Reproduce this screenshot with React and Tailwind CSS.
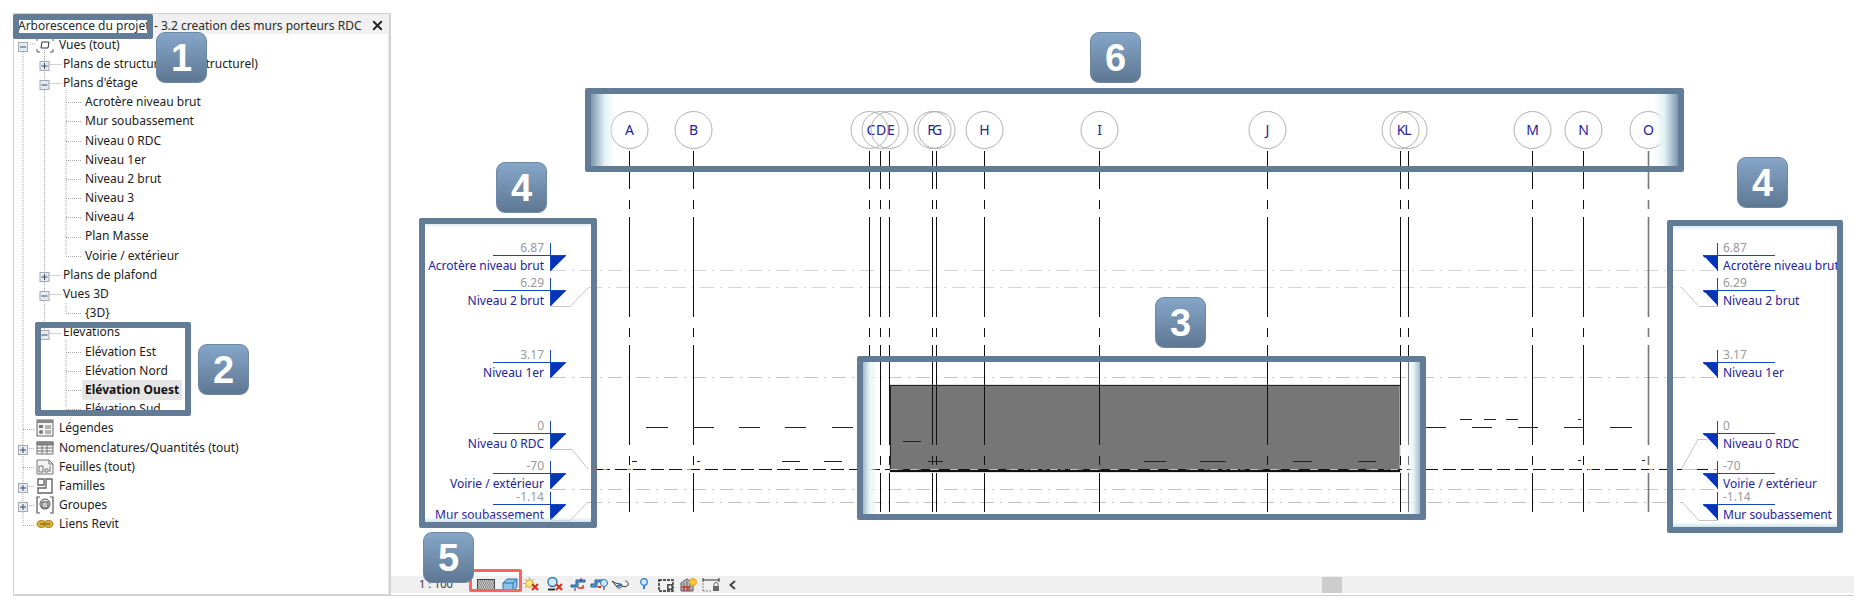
import React from 'react';
import { X } from 'lucide-react';

const treeRows = [
  { label: 'Vues (tout)', depth: 0, icon: 'views' },
  { label: 'Plans de structure (Tout structurel)', depth: 1 },
  { label: "Plans d'étage", depth: 1 },
  { label: 'Acrotère niveau brut', depth: 2 },
  { label: 'Mur soubassement', depth: 2 },
  { label: 'Niveau 0 RDC', depth: 2 },
  { label: 'Niveau 1er', depth: 2 },
  { label: 'Niveau 2 brut', depth: 2 },
  { label: 'Niveau 3', depth: 2 },
  { label: 'Niveau 4', depth: 2 },
  { label: 'Plan Masse', depth: 2 },
  { label: 'Voirie / extérieur', depth: 2 },
  { label: 'Plans de plafond', depth: 1 },
  { label: 'Vues 3D', depth: 1 },
  { label: '{3D}', depth: 2 },
  { label: 'Elévations', depth: 1 },
  { label: 'Elévation Est', depth: 2 },
  { label: 'Elévation Nord', depth: 2 },
  { label: 'Elévation Ouest', depth: 2, bold: true },
  { label: 'Elévation Sud', depth: 2 },
  { label: 'Légendes', depth: 0, icon: 'legend' },
  { label: 'Nomenclatures/Quantités (tout)', depth: 0, icon: 'table' },
  { label: 'Feuilles (tout)', depth: 0, icon: 'sheet' },
  { label: 'Familles', depth: 0, icon: 'family' },
  { label: 'Groupes', depth: 0, icon: 'group' },
  { label: 'Liens Revit', depth: 0, icon: 'link' },
];

const rowY = (i) => 44.5 + 19.2 * i;

const expanders = [
  [23, 0, false], [44.5, 1, true], [44.5, 2, false], [44.5, 12, true], [44.5, 13, false], [44.5, 15, false],
  [23, 21, true], [23, 23, true], [23, 24, true],
];

const TreeIcon = ({ name }) => {
  const cls = 'w-[18px] h-[18px] shrink-0';
  if (name === 'views') {
    return (
      <svg viewBox="0 0 18 18" className={cls} fill="none" stroke="#555" strokeWidth="1">
        <path d="M1 5V2h3M14 2h3v3M17 13v3h-3M4 16H1v-3" />
        <path d="M6 6h7l-1 6H5z" stroke="#333" />
      </svg>
    );
  }
  if (name === 'legend') {
    return (
      <svg viewBox="0 0 18 18" className={cls}>
        <rect x="1" y="1" width="16" height="16" fill="#f3f3f3" stroke="#666" />
        <rect x="1" y="1" width="16" height="3" fill="#8a8a8a" />
        <rect x="3" y="6" width="4" height="3" fill="#777" />
        <circle cx="5" cy="13" r="2" fill="#777" />
        <path d="M9 7h6M9 9h6M9 12h6M9 14h6" stroke="#777" />
      </svg>
    );
  }
  if (name === 'table') {
    return (
      <svg viewBox="0 0 18 18" className={cls} fill="#f5f5f5" stroke="#777">
        <rect x="1" y="3" width="16" height="12" />
        <path d="M1 3h16v3H1z" fill="#888" />
        <path d="M1 9h16M1 12h16M6 6v9M11 6v9" fill="none" />
      </svg>
    );
  }
  if (name === 'sheet') {
    return (
      <svg viewBox="0 0 18 18" className={cls} fill="none" stroke="#777">
        <path d="M1 2h12l4 4v10H1z" fill="#f3f3f3" />
        <path d="M13 2v4h4M3 8h4v6H3zM9 11h3v3H9zM14 8v6" />
      </svg>
    );
  }
  if (name === 'family') {
    return (
      <svg viewBox="0 0 18 18" className={cls} fill="none" stroke="#666" strokeWidth="1.4">
        <path d="M2 2h6v6H2zM10 2h6v14H2v-5h8z" />
      </svg>
    );
  }
  if (name === 'group') {
    return (
      <svg viewBox="0 0 18 18" className={cls} fill="none" stroke="#555">
        <path d="M4 1H1v16h3M14 1h3v16h-3" strokeWidth="1.2" />
        <circle cx="9" cy="8" r="5" fill="#e4e4e4" />
        <rect x="6" y="6" width="6" height="6" fill="#ccc" />
      </svg>
    );
  }
  return (
    <svg viewBox="0 0 18 18" className={cls} fill="#d8b036" stroke="#a8861f">
      <ellipse cx="5.5" cy="9" rx="4.5" ry="3.5" />
      <ellipse cx="12.5" cy="9" rx="4.5" ry="3.5" />
      <path d="M4 9h10" stroke="#6f5a14" />
    </svg>
  );
};

const TreeLines = () => (
  <svg viewBox="14 34 374 561" className="absolute inset-0 w-[374px] h-[561px]">
    <g stroke="#a8a8a8" strokeDasharray="1 1" fill="none">
      <path d="M23 50V524M44.5 50V332M66 90V255M66 303V312M66 340V408" />
      <path d="M30 44h6" />
      {treeRows.map((row, i) => {
        const y = Math.round(rowY(i)) + 0.5;
        if (row.depth === 2) return <path key={i} d={`M66 ${y}H82`} />;
        if (row.depth === 1) return <path key={i} d={`M44.5 ${y}H62`} />;
        if (i > 0) return <path key={i} d={`M23 ${y}H35`} />;
        return null;
      })}
    </g>
    {expanders.map(([x, i, plus]) => {
      const y = Math.round(rowY(i)) + 2;
      return (
        <g key={`${x}-${i}`}>
          <rect x={x - 4.5} y={y - 4.5} width="9" height="9" fill="#e6eaf1" stroke="#a3a9b3" />
          <path d={plus ? `M${x - 3} ${y}h6M${x} ${y - 3}v6` : `M${x - 3} ${y}h6`} stroke="#3d4a63" />
        </g>
      );
    })}
  </svg>
);

const ProjectTree = () => (
  <div className="relative flex-1 border-r border-[#e8e8e8] bg-white pt-[1px]">
    <TreeLines />
    <div className="relative flex flex-col">
      {treeRows.map((row) => (
        <div
          key={row.label}
          className={`flex h-[19.2px] items-center text-[12px] leading-none text-[#1c1c1c] whitespace-nowrap ${
            row.depth === 0 ? 'pl-[22px]' : row.depth === 1 ? 'pl-[46px]' : 'pl-[68px]'
          }`}
        >
          {row.icon && <TreeIcon name={row.icon} />}
          <span
            className={`flex h-[19.2px] items-center px-[3px] ${row.icon ? 'ml-[2px]' : ''} ${
              row.bold ? 'bg-[#e5e5e5] font-bold text-[#111]' : ''
            }`}
          >
            {row.label}
          </span>
        </div>
      ))}
    </div>
  </div>
);

const gridLines = [
  { name: 'A', x: 629.5 }, { name: 'B', x: 693.5 }, { name: 'C', x: 869.5, tx: 871 }, { name: 'D', x: 880.5, tx: 881 },
  { name: 'E', x: 889.5, tx: 891 }, { name: 'F', x: 932.5, tx: 931 }, { name: 'G', x: 936.5, tx: 937 }, { name: 'H', x: 984.5 },
  { name: 'I', x: 1099.5 }, { name: 'J', x: 1267.5 }, { name: 'K', x: 1400.5, tx: 1401 }, { name: 'L', x: 1408.5, tx: 1408 },
  { name: 'M', x: 1532.5 }, { name: 'N', x: 1583.5 }, { name: 'O', x: 1648.5, gray: true },
];

const levelLines = [
  { y: 270.5, x1: 552, x2: 1718, color: '#d4d4d4' },
  { y: 287.5, x1: 588, x2: 1682, color: '#d4d4d4' },
  { y: 377.5, x1: 552, x2: 1718, color: '#c6c6c6' },
  { y: 489.5, x1: 552, x2: 1718, color: '#c6c6c6' },
  { y: 502.5, x1: 588, x2: 1682, color: '#c0c0c0' },
];

const levels = [
  { name: 'Acrotère niveau brut', value: '6.87', y: 256 },
  { name: 'Niveau 2 brut', value: '6.29', y: 291 },
  { name: 'Niveau 1er', value: '3.17', y: 363 },
  { name: 'Niveau 0 RDC', value: '0', y: 434 },
  { name: 'Voirie / extérieur', value: '-70', y: 474 },
  { name: 'Mur soubassement', value: '-1.14', y: 505 },
];

const leaders = [
  'M551 306.5H570L588 288', 'M551 449.5H572L588 469', 'M551 520.5H570L588 502',
  'M1682 288L1699 306.5H1718', 'M1682 468L1698 439.5H1718', 'M1682 502L1699 520.5H1718',
];

const sectionDashes = [
  [646, 668, 427], [693, 714, 427], [739, 760, 427], [785, 806, 427], [832, 853, 427],
  [1425, 1446, 427], [1472, 1492, 427], [1518, 1538, 427], [1564, 1584, 427], [1610, 1632, 427],
  [1460, 1472, 419], [1484, 1496, 419], [1506, 1518, 419], [1578, 1581, 419],
  [903, 921, 441], [928, 943, 461], [1144, 1166, 461], [1200, 1226, 461], [1293, 1312, 461], [1358, 1376, 461],
  [632, 637, 461], [697, 700, 461], [782, 800, 461], [824, 842, 461], [864, 868, 454], [1412, 1416, 454],
  [1578, 1581, 460], [1642, 1645, 460],
];

const LevelHead = ({ level, side }) => {
  const { y, name, value } = level;
  if (side === 'left') {
    return (
      <g>
        <path d={`M493 ${y - 0.5}H566`} stroke="#1347c4" />
        <path d={`M550.5 ${y - 13}V${y + 15}`} stroke="#1347c4" />
        <polygon points={`551,${y} 566,${y} 551,${y + 15}`} fill="#0434b8" />
        <path d={`M553 ${y + 14}L566 ${y + 1}`} stroke="#fff" strokeWidth="1.2" />
        <text x="544" y={y - 4} textAnchor="end" fontSize="12" fill="#9a9a9a">{value}</text>
        <text x="544" y={y + 14} textAnchor="end" fontSize="12" fill="#23239b">{name}</text>
      </g>
    );
  }
  return (
    <g>
      <path d={`M1703 ${y - 0.5}H1775`} stroke="#1347c4" />
      <path d={`M1717.5 ${y - 13}V${y + 15}`} stroke="#1347c4" />
      <polygon points={`1718,${y} 1703,${y} 1718,${y + 15}`} fill="#0434b8" />
      <path d={`M1716 ${y + 14}L1705 ${y + 2}`} stroke="#fff" strokeWidth="1.2" />
      <text x="1723" y={y - 4} fontSize="12" fill="#9a9a9a">{value}</text>
      <text x="1723" y={y + 14} fontSize="12" fill="#23239b">{name}</text>
    </g>
  );
};

const ElevationDrawing = () => (
  <svg viewBox="391 13 1463 563" className="block w-[1463px] h-[563px] font-['Noto_Sans']">
    <rect x="890" y="385" width="510" height="87" fill="#767676" stroke="#c4c4c4" />
    <path d="M890.5 385.500H1400M890.500 385V472" stroke="#222" fill="none" />
    <path d="M890 471H1400" stroke="#111" strokeWidth="2" />

    {levelLines.map((l) => (
      <line key={l.y} x1={l.x1} x2={l.x2} y1={l.y} y2={l.y} stroke={l.color} strokeDasharray="14 6 2 6" />
    ))}
    {leaders.map((d) => (
      <path key={d} d={d} fill="none" stroke="#c4c4c4" />
    ))}

    {gridLines.map((g) => (
      <g key={g.name}>
        <line
          x1={g.x}
          x2={g.x}
          y1="151"
          y2="512"
          stroke={g.gray ? '#777' : '#111'}
          strokeWidth={g.gray ? 1.6 : 1}
          strokeDasharray="100 11 9 8"
          strokeDashoffset="62"
        />
        <circle cx={g.x} cy="130" r="18.5" fill="none" stroke="#b0b0b0" />
        <text x={g.tx || g.x} y="135" textAnchor="middle" fontSize="14" fill="#23239b">{g.name}</text>
      </g>
    ))}

    {sectionDashes.map(([a, b, y]) => (
      <line key={`${a}-${y}`} x1={a} x2={b} y1={y + 0.5} y2={y + 0.5} stroke="#222" />
    ))}

    <line x1="597" x2="1712" y1="469.5" y2="469.5" stroke="#111" strokeDasharray="13 5" />
    <line x1="890" x2="1400" y1="469.5" y2="469.5" stroke="#c4c4c4" strokeDasharray="8 12" />
    <line x1="1682" x2="1697" y1="469.5" y2="469.5" stroke="#c4c4c4" />
    {[603, 627, 687, 1588, 1649, 1714].map((x) => (
      <line key={x} x1={x} x2={x + 4} y1="469.5" y2="469.5" stroke="#f08a24" />
    ))}

    {levels.map((level) => (
      <g key={level.name}>
        <LevelHead level={level} side="left" />
        <LevelHead level={level} side="right" />
      </g>
    ))}
  </svg>
);

const StatusIcon = ({ className, viewBox, children }) => (
  <svg viewBox={viewBox} className={`h-[16px] shrink-0 ${className}`} fill="none">
    {children}
  </svg>
);

const StatusBar = () => (
  <div className="flex h-[17px] items-center bg-[#f0f0f0] pl-[28px] text-[11px] font-['Noto_Sans'] text-[#333]">
    <span className="w-[36px] whitespace-nowrap">1 : 100</span>
    <StatusIcon viewBox="0 0 18 16" className="ml-[22px] w-[18px]">
      <rect x="0.5" y="2.5" width="17" height="11" fill="#c4c4c4" stroke="#444" />
      {[4, 6, 8, 10, 12].map((y, i) => (
        <path key={y} d={`M${i % 2 ? 2 : 1} ${y}H17`} stroke="#5a5a5a" strokeDasharray="1 1" />
      ))}
    </StatusIcon>
    <StatusIcon viewBox="0 0 16 16" className="ml-[7px] w-[16px]">
      <path d="M1 6l4-4h10v8l-4 4H1z" fill="#8ec2e6" stroke="#2a6fb0" />
      <path d="M1 6h10v8M11 6l4-4" stroke="#2a6fb0" />
    </StatusIcon>
    <StatusIcon viewBox="0 0 16 16" className="ml-[5px] w-[16px]">
      <circle cx="6.5" cy="6.500" r="3.800" fill="#ffe88a" stroke="#d9a520" />
      <path d="M6.500 0v2M0 6.500h2M2 2l1.500 1.500M11 2L9.500 3.500M2 11l1.500-1.500" stroke="#d9a520" />
      <path d="M9 7l6 6M15 7l-6 6" stroke="#d2301f" strokeWidth="2" />
    </StatusIcon>
    <StatusIcon viewBox="0 0 16 16" className="ml-[8px] w-[16px]">
      <circle cx="5.500" cy="5" r="4.500" fill="#cfe8f7" stroke="#2a6fb0" strokeWidth="1.300" />
      <path d="M1 12.500h7" stroke="#333" strokeWidth="2" />
      <path d="M9 7l6 6M15 7l-6 6" stroke="#d2301f" strokeWidth="2" />
    </StatusIcon>
    <StatusIcon viewBox="0 0 16 16" className="ml-[7px] w-[16px]">
      <path d="M1 8h5V3h9v2H8v5H1z" fill="#4f9bd9" stroke="#2a5f96" />
      <path d="M8 11h5V8" stroke="#d2301f" strokeWidth="1.400" />
      <path d="M11 1v3M5 11v3" stroke="#333" />
    </StatusIcon>
    <StatusIcon viewBox="0 0 18 16" className="ml-[4px] w-[18px]">
      <path d="M1 7h4V3h8v2H7v5H1z" fill="#4f9bd9" stroke="#2a5f96" />
      <path d="M8 9h3v2H8z" fill="#d2301f" />
      <circle cx="14" cy="6" r="3.500" fill="#cfe8f7" stroke="#2a6fb0" />
      <path d="M13 10h2v3h-2z" fill="#8a8a8a" />
    </StatusIcon>
    <StatusIcon viewBox="0 0 18 16" className="ml-[4px] w-[18px]">
      <path d="M0 4l5 6c2 2 4 1 5-1l-1-2c-3 0-6-1-9-3zM10 9c2 1 5 1 6-1s-1-4-3-4" stroke="#333" />
      <path d="M5 9l4-1" stroke="#2a6fb0" strokeWidth="2" />
    </StatusIcon>
    <StatusIcon viewBox="0 0 8 16" className="ml-[10px] w-[8px]">
      <circle cx="4" cy="5" r="3.300" fill="#cfe8f7" stroke="#2a7fd0" strokeWidth="1.200" />
      <path d="M3 9h2v3H3z" fill="#2a7fd0" />
    </StatusIcon>
    <StatusIcon viewBox="0 0 16 16" className="ml-[10px] w-[16px]">
      <rect x="1" y="3" width="14" height="11" stroke="#222" strokeWidth="1.400" strokeDasharray="3 1" />
      <rect x="9" y="7" width="6" height="6" fill="#555" />
      <circle cx="12" cy="10" r="1.500" fill="#fff" />
    </StatusIcon>
    <StatusIcon viewBox="0 0 17 16" className="ml-[6px] w-[17px]">
      <path d="M1 6l6-4 6 4v8H1z" fill="#bbb" stroke="#555" />
      <path d="M4 6v8M7 4v10M10 6v8" stroke="#666" />
      <path d="M2 10h8M4 10v4M8 10v4" stroke="#d2301f" strokeWidth="1.400" />
      <circle cx="13" cy="5" r="3.500" fill="#ffc53a" stroke="#e8a317" />
    </StatusIcon>
    <StatusIcon viewBox="0 0 18 16" className="ml-[5px] w-[18px]">
      <path d="M1 1v4M17 1v4M1 3h16" stroke="#333" />
      <path d="M1 6v8M1 14h9" stroke="#888" strokeDasharray="2 1" />
      <rect x="11" y="9" width="6" height="5" fill="#666" />
      <path d="M12 9V7.500a2 2 0 0 1 4 0V9" stroke="#666" />
    </StatusIcon>
    <StatusIcon viewBox="0 0 7 16" className="ml-[9px] w-[7px]">
      <path d="M6 4L1.500 8L6 12" stroke="#444" strokeWidth="2" />
    </StatusIcon>
    <div className="ml-[586px] h-[16px] w-[20px] bg-[#cdcdcd]" />
  </div>
);

const Badge = ({ className, children }) => (
  <div
    className={`absolute flex h-[51px] w-[51px] items-center justify-center rounded-[9px] border border-[#6f88a3] bg-[linear-gradient(to_bottom,#86a6c8,#5e7793)] font-['Liberation_Sans'] text-[38px] leading-none font-bold text-white ${className}`}
  >
    {children}
  </div>
);

const Frame = ({ className }) => (
  <div className={`absolute rounded-[2px] border-[6px] border-[#627b96] ${className}`} />
);

export default function App() {
  return (
    <div className="relative flex h-[610px] w-[1862px] overflow-hidden bg-white pt-[13px] pr-[8px] pb-[14px] pl-[13px] font-['Noto_Sans',sans-serif]">
      <div className="flex w-[378px] flex-col border-t border-b-2 border-l border-r-2 border-[#d2d2d2] bg-white">
        <div className="flex h-[20px] shrink-0 items-center bg-[#f0f0f0] pt-[3px] pr-[4px] text-[12px] whitespace-nowrap text-[#2a2a2a]">
          <span className="flex h-[17px] w-[133px] items-center bg-white pl-[4px]">Arborescence du projet</span>
          <span className="ml-[7px]">- 3.2 creation des murs porteurs RDC</span>
          <X size={15} strokeWidth={3} className="ml-auto text-[#222]" />
        </div>
        <ProjectTree />
      </div>

      <div className="flex flex-1 flex-col">
        <ElevationDrawing />
        <StatusBar />
        <div className="mt-[2px] border-b border-[#cfcfcf]" />
      </div>

      <Frame className="left-[13px] top-[14px] h-[25px] w-[140px] border-[5px]" />
      <Frame className="left-[35px] top-[322px] h-[94px] w-[156px]" />
      <Frame className="left-[857px] top-[356px] h-[164px] w-[569px] bg-[linear-gradient(to_right,#a3bac9,#eaf7f9_7px,transparent_15px,transparent_calc(100%-15px),#eaf7f9_calc(100%-7px),#a3bac9)]" />
      <Frame className="left-[419px] top-[218px] h-[310px] w-[178px] bg-[linear-gradient(to_bottom,#dcecf2,transparent_4px,transparent_calc(100%-5px),#cfe3ea)]" />
      <Frame className="left-[1667px] top-[220px] h-[313px] w-[176px] bg-[linear-gradient(to_bottom,#dcecf2,transparent_5px,transparent_calc(100%-5px),#cfe3ea)]" />
      <Frame className="left-[585px] top-[88px] h-[84px] w-[1099px] bg-[linear-gradient(to_right,#7e97ad,#e4f3f6_14px,transparent_24px,transparent_calc(100%-24px),#e4f3f6_calc(100%-14px),#7e97ad)]" />
      <div className="absolute left-[469px] top-[569px] h-[23px] w-[53px] rounded-[2px] border-[3px] border-[#ff6262]" />

      <Badge className="left-[156px] top-[32px]">1</Badge>
      <Badge className="left-[198px] top-[344px]">2</Badge>
      <Badge className="left-[1155px] top-[297px]">3</Badge>
      <Badge className="left-[496px] top-[162px]">4</Badge>
      <Badge className="left-[1737px] top-[157px]">4</Badge>
      <Badge className="left-[423px] top-[532px]">5</Badge>
      <Badge className="left-[1090px] top-[32px]">6</Badge>
    </div>
  );
}
